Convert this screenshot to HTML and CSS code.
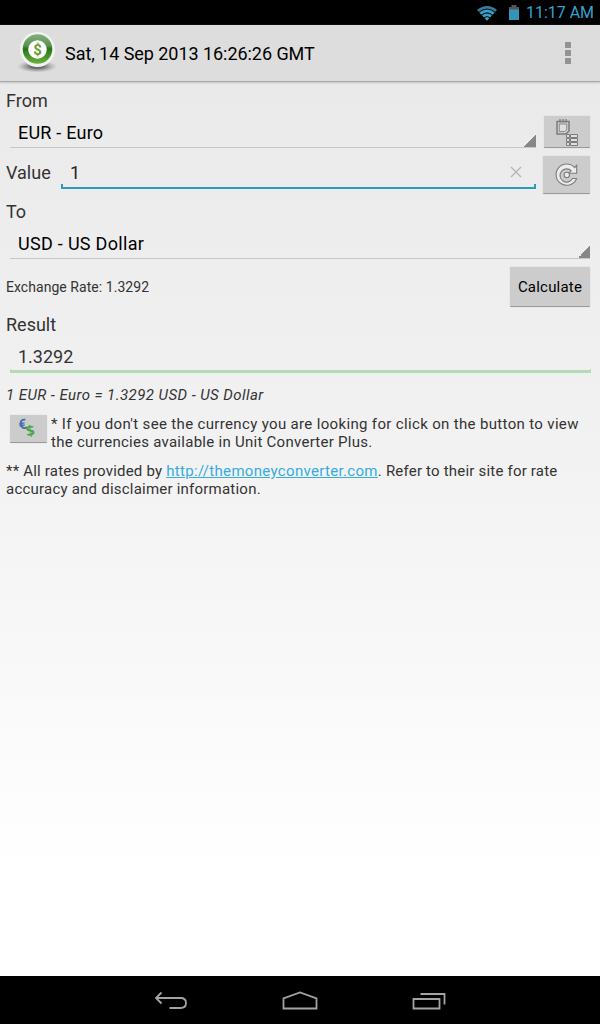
FILE: index.html
```html
<!DOCTYPE html>
<html lang="en">
<head>
<meta charset="utf-8">
<title>Currency Converter</title>
<link rel="stylesheet" href="styles.css">
</head>
<body>
<div class="status">
  <svg class="wifi" width="22" height="16" viewBox="0 0 22 16"><path d="M1 5Q11-3 21 5L11 15.500Z" fill="#397f9b"/><path d="M3 7Q11 1 19 7M5.500 10Q11 6 16.500 10M8 12.700Q11 10.500 14 12.700" fill="none" stroke="#041218" stroke-width="1"/><path d="M4 8Q11 2 18 8L16.800 9.200Q11 4.500 5.200 9.200ZM6.500 10.700Q11 7.300 15.500 10.700L14.200 12Q11 9.700 7.800 12ZM8.800 13.200Q11 11.700 13.200 13.200L11 15.500Z" fill="#39a5cf"/></svg>
  <svg class="battery" width="12" height="17" viewBox="0 0 12 17"><path d="M3.500 1h5v2H11v3H1V3h2.500z" fill="#555"/><path d="M1 5.500h10V16H1z" fill="#3494b9"/></svg>
  <span class="clock">11:17 AM</span>
</div>
<header class="bar">
  <svg class="logo" width="44" height="44" viewBox="0 0 44 44">
    <defs>
      <radialGradient id="shadow"><stop offset=".3" stop-color="#555" stop-opacity=".85"/><stop offset="1" stop-color="#888" stop-opacity="0"/></radialGradient>
      <linearGradient id="ring" x1="0" y1="0" x2="0" y2="1"><stop offset="0" stop-color="#86ad80"/><stop offset=".38" stop-color="#5c9452"/><stop offset=".5" stop-color="#267417"/><stop offset="1" stop-color="#6cb43a"/></linearGradient>
    </defs>
    <ellipse cx="22" cy="35.500" rx="20" ry="6" fill="url(#shadow)"/>
    <circle cx="22.500" cy="18.500" r="17.500" fill="#f1f3f0"/>
    <circle cx="22.500" cy="18" r="14.800" fill="url(#ring)"/>
    <circle cx="22.500" cy="18.500" r="9.300" fill="#fff"/>
    <text x="22.500" y="23.500" text-anchor="middle" class="coin">$</text>
  </svg>
  <h1 class="title">Sat, 14 Sep 2013 16:26:26 GMT</h1>
  <div class="overflow"><i></i><i></i><i></i></div>
</header>
<main class="content">
  <div class="label from"><span class="t-from">From</span></div>
  <div class="row from-row">
    <div class="spinner"><span class="t-eur">EUR - Euro</span></div>
    <button class="btn"><svg width="24" height="28" viewBox="0 0 24 28" fill="none" stroke="#7c7c7c"><path d="M2 3.500h12v9.500l-3 3H2z" fill="#ccc" stroke-width="1.500"/><path d="M4.300 6h7.400v5.500L9.500 13.500H4.300z" fill="#dedede" stroke-width=".8"/><path d="M5 1v3.500M8 1v3.500M11 1v3.500" stroke-width="1.300"/><path d="M11.500 16.500h3v3h-3zM15.500 16.500h7v3h-7zM11.500 20.500h3v3h-3zM15.500 20.500h7v3h-7zM11.500 24.500h3v3h-3zM15.500 24.500h7v3h-7z" fill="#e0e0e0"/></svg></button>
  </div>
  <div class="row value-row">
    <span class="label t-value">Value</span>
    <div class="edit"><span>1</span><svg class="clear" width="12" height="12" viewBox="0 0 12 12"><path d="M1 1l10 10M11 1L1 11" stroke="#b5b5b5" stroke-width="1.400"/></svg></div>
    <button class="btn refresh"><svg width="26" height="26" viewBox="0 0 26 26" fill="#ececec" stroke="#7c7c7c" stroke-width="1.100"><path d="M20.700 5.700L22.700 3.200V11.200H14.800L17.300 8.800A6.600 6.600 0 1 0 18.500 16.500H22.600A10.600 10.600 0 1 1 20.700 5.700Z"/><circle cx="12.800" cy="13" r="2.700"/></svg></button>
  </div>
  <div class="label to"><span class="t-to">To</span></div>
  <div class="spinner usd"><span class="t-usd">USD - US Dollar</span></div>
  <div class="row calc-row">
    <span class="rate">Exchange Rate: 1.3292</span>
    <button class="btn calculate"><span>Calculate</span></button>
  </div>
  <div class="label result"><span class="t-result">Result</span></div>
  <div class="edit output"><span class="t-out">1.3292</span></div>
  <p class="summary"><span class="t-sum">1 EUR - Euro = 1.3292 USD - US Dollar</span></p>
  <div class="hint">
    <button class="btn small"><svg width="24" height="27" viewBox="0 0 24 27"><text x="2" y="14" class="euro" transform="rotate(-14 7 10)">€</text><text x="9" y="21" class="dollar" transform="rotate(-10 14 16)">$</text></svg></button>
    <p class="note"><span class="n1">* If you don't see the currency you are looking for click on the button to view</span><br><span class="n2">the currencies available in Unit Converter Plus.</span></p>
  </div>
  <p class="note rates"><span class="n3">** All rates provided by <a class="link">http://themoneyconverter.com</a>. Refer to their site for rate</span><br><span class="n4">accuracy and disclaimer information.</span></p>
</main>
<nav class="nav">
  <svg width="34" height="20" viewBox="0 0 34 20"><path d="M7.500 1.500L2 7l5.500 5.500M2 7h24.500q5.500 0 5.500 5t-5.500 5H15.500"/></svg>
  <svg width="38" height="20" viewBox="0 0 38 20"><path d="M2.500 17.500V7.500L19 1.500l16.500 6v10z"/></svg>
  <svg width="34" height="20" viewBox="0 0 34 20"><path d="M1.500 8h26v9.500h-26zM8.500 3h24v10.500"/></svg>
</nav>
</body>
</html>
```
FILE: styles.css
```css
* { box-sizing: border-box; }
body { margin: 0; height: 1024px; display: flex; flex-direction: column; font-family: Roboto, "Liberation Sans", sans-serif; background: #000; color: #333; overflow: hidden; }
p, h1 { margin: 0; font-weight: 400; }
span { white-space: nowrap; }
svg { display: block; flex: none; }
.status { height: 25px; display: flex; align-items: center; justify-content: flex-end; padding-right: 6px; color: #33a4d0; font-size: 16px; flex: none; }
.wifi { margin-right: 10px; }
.battery { margin-right: 6px; }
.clock { letter-spacing: -0.02px; }
.bar { height: 57px; flex: none; display: flex; align-items: center; background: #ddd; border-bottom: 1px solid #a9a9a9; padding: 0 29px 0 15px; box-shadow: 0 1px 2px #c4c4c4; z-index: 1; }
.title { margin-left: 6px; font-size: 18px; color: #000; flex: 1; letter-spacing: -0.05px; }
.coin { font: bold 15px Roboto, sans-serif; fill: #6a9d2a; }
.overflow { display: grid; gap: 2px; }
.overflow i { width: 6px; height: 6px; background: #939393; }
.content { flex: 1; padding: 0 10px 0 6px; background: linear-gradient(#eaeaea, #f2f2f2 42%, #fff 88%); }
.label { font-size: 18px; line-height: 22px; }
.from { height: 34px; padding-top: 8px; }
.row { display: flex; }
.from-row { height: 32px; gap: 8px; padding-left: 4px; }
.spinner { flex: 1; height: 32px; padding-left: 8px; line-height: 33px; font-size: 18px; color: #000; background: linear-gradient(135deg, transparent 50%, #878787 50%) right bottom / 12px 12px no-repeat; border-bottom: 1px solid #c6c6c6; }
.t-eur { letter-spacing: 0.22px; }
.t-usd { letter-spacing: 0.3px; }
.btn { padding: 0; border: 0; border-bottom: 1px solid #999; background: #ccc; width: 46px; height: 32px; display: flex; align-items: center; justify-content: center; flex: none; box-shadow: 0 0 1px #bbb; border-radius: 1px; font-family: inherit; }
.value-row { height: 39px; margin-top: 7px; }
.t-value { width: 55px; padding-top: 7px; }
.edit { display: flex; align-items: center; justify-content: space-between; font-size: 18px; border: solid #2a9abf; border-width: 0 2px 2px; border-image: linear-gradient(transparent calc(100% - 5px), #2a9abf 0) 1 2 2; }
.value-row .edit { width: 475px; height: 34px; padding: 2px 12px 0 7px; color: #222; }
.refresh { width: 47px; height: 38px; margin: 1px 0 0 7px; }
.to { height: 34px; padding-top: 7px; }
.usd { margin-left: 4px; height: 31px; line-height: 31px; }
.calc-row { height: 40px; margin-top: 8px; align-items: center; justify-content: space-between; }
.rate { font-size: 14px; letter-spacing: 0.05px; }
.calculate { width: 80px; height: 40px; font-size: 15px; color: #000; letter-spacing: 0.2px; }
.result { height: 34px; padding-top: 7px; }
.output { height: 32px; margin: 0 -1px 0 4px; padding: 1px 0 0 7px; border-width: 0 1px 3px; border-image: linear-gradient(transparent calc(100% - 4px), #b4dbb4 0) 1 1 3; }
.summary { height: 42px; padding-top: 13px; font-size: 15px; line-height: 18px; font-style: italic; letter-spacing: 0.44px; }
.hint { display: flex; padding-left: 4px; }
.small { width: 37px; height: 28px; margin-right: 4px; }
.note { font-size: 15px; line-height: 18px; }
.n1 { letter-spacing: 0.34px; }
.n2 { letter-spacing: 0.27px; }
.n3 { letter-spacing: 0.2px; }
.n3 .link { letter-spacing: 0.32px; }
.n4 { letter-spacing: 0.22px; }
.rates { margin-top: 11px; }
.link { color: #35ade0; text-decoration: underline; }
.euro { font: bold 14px "Open Sans", sans-serif; fill: #456db0; }
.dollar { font: bold 15px "Open Sans", sans-serif; fill: #49a745; }
.nav { height: 48px; flex: none; display: flex; align-items: center; justify-content: center; gap: 93px; padding-top: 2px; background: #000; border: 0; }
.nav path { fill: none; stroke: #a3a3a3; stroke-width: 1.8; }
```
